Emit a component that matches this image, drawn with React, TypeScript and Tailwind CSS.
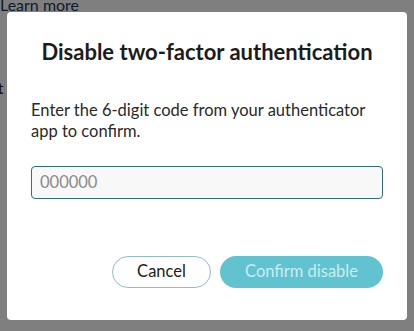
export default function App() {
  return (
    <div
      className="relative w-[414px] h-[331px] overflow-hidden bg-white text-[#222]"
      style={{ fontFamily: 'Lato, "Open Sans", sans-serif' }}
    >
      {/* Page behind the modal */}
      <div className="text-[16px] leading-[20px]">
        <p className="-mt-[5px] pl-0 text-[#1b3a5c]">Learn more</p>
        <p className="mt-[63px] -ml-[8px]">rt</p>
      </div>

      {/* Backdrop */}
      <div className="absolute inset-0 bg-black/50 flex items-center justify-center">
        <div className="w-[400px] h-[308px] bg-white rounded-[4px] px-6 pt-[25px] pb-8 flex flex-col">
          <h2 className="text-[22px] leading-[30px] font-bold text-center text-[#1c1c1c]">
            Disable two-factor authentication
          </h2>
          <p className="mt-[33px] text-[16.5px] leading-[21px] text-[#2a2a2a]">
            Enter the 6-digit code from your authenticator app to confirm.
          </p>
          <input
            placeholder="000000"
            className="mt-[24px] h-[33px] w-full rounded-[4px] border border-[#2f6f7a] bg-[#f8f8f8] px-[8px] text-[16.5px] text-[#222] placeholder:text-[#8a8a8a] outline-none"
          />
          <div className="mt-auto flex justify-end gap-[9px]">
            <button className="h-[32px] w-[99px] rounded-full border border-[#8fbec6] bg-white text-[16.5px] text-[#1c1c1c]">
              Cancel
            </button>
            <button className="h-[32px] w-[163px] rounded-full bg-[#62c3d0] text-[16.5px] text-[#c9ecf1]">
              Confirm disable
            </button>
          </div>
        </div>
      </div>
    </div>
  );
}
